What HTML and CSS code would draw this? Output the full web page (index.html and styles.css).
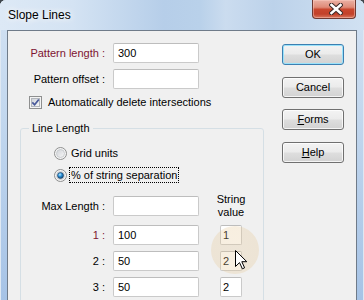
FILE: index.html
```html
<!DOCTYPE html>
<html>
<head>
<meta charset="utf-8">
<link rel="stylesheet" href="styles.css">
</head>
<body>
<div class="window">
  <div class="titlebar">
    <span class="title">Slope Lines</span>
    <div class="close">
      <svg width="14" height="12" viewBox="0 0 14 12">
        <path d="M2.5 2 L11.5 10 M11.5 2 L2.5 10" stroke="#3d2a28" stroke-width="4.6" stroke-linecap="square" fill="none"/>
        <path d="M2.5 2 L11.5 10 M11.5 2 L2.5 10" stroke="#ffffff" stroke-width="2.6" stroke-linecap="square" fill="none"/>
      </svg>
    </div>
  </div>
  <div class="client">
    <div class="main">
      <div class="form-grid">
        <span class="lbl red">Pattern length :</span>
        <div class="field">300</div>
        <span class="lbl">Pattern offset :</span>
        <div class="field"></div>
      </div>
      <div class="check-row">
        <svg width="13" height="13" viewBox="0 0 13 13">
          <defs>
            <linearGradient id="cbg" x1="0" y1="0" x2="1" y2="1">
              <stop offset="0" stop-color="#cdd1d8"/>
              <stop offset="1" stop-color="#f7f7f7"/>
            </linearGradient>
          </defs>
          <rect x="0.5" y="0.5" width="12" height="12" fill="#f4f4f4" stroke="#8e8f8f"/>
          <rect x="2.5" y="2.5" width="8" height="8" fill="url(#cbg)" stroke="#b2b6bc"/>
          <path d="M3.3 6.3 L5.6 8.8 L9.8 3.4" fill="none" stroke="#48599a" stroke-width="1.7"/>
        </svg>
        <span>Automatically delete intersections</span>
      </div>
      <fieldset class="group">
        <legend>Line Length</legend>
        <div class="radios">
          <div class="radio-row">
            <svg class="radio" width="13" height="13" viewBox="0 0 13 13">
              <defs>
                <linearGradient id="rbg" x1="0" y1="0" x2="1" y2="1">
                  <stop offset="0" stop-color="#cfd2d7"/>
                  <stop offset="1" stop-color="#f8f8f8"/>
                </linearGradient>
              </defs>
              <circle cx="6.5" cy="6.5" r="6" fill="#f4f4f4" stroke="#8e8f8f"/>
              <circle cx="6.5" cy="6.5" r="4" fill="url(#rbg)" stroke="#c3c6ca" stroke-width="0.8"/>
            </svg>
            <span class="rlabel">Grid units</span>
          </div>
          <div class="radio-row">
            <svg class="radio" width="13" height="13" viewBox="0 0 13 13">
              <defs>
                <radialGradient id="rdot" cx="0.4" cy="0.35" r="0.7">
                  <stop offset="0" stop-color="#b8edff"/>
                  <stop offset="0.45" stop-color="#2b8ed6"/>
                  <stop offset="1" stop-color="#0c426f"/>
                </radialGradient>
              </defs>
              <circle cx="6.5" cy="6.5" r="6" fill="#f4f4f4" stroke="#8e8f8f"/>
              <circle cx="6.5" cy="6.5" r="4" fill="#e4e6e9" stroke="#c3c6ca" stroke-width="0.8"/>
              <circle cx="6.5" cy="6.5" r="3" fill="url(#rdot)" stroke="#1d3f63" stroke-width="0.6"/>
            </svg>
            <span class="rlabel focus">% of string separation</span>
          </div>
        </div>
        <div class="len-grid">
          <span class="lbl">Max Length :</span>
          <div class="field"></div>
          <div class="sv-head">String<br>value</div>

          <span class="lbl red">1 :</span>
          <div class="field">100</div>
          <div class="field small">1</div>

          <span class="lbl">2 :</span>
          <div class="field">50</div>
          <div class="field small">2</div>

          <span class="lbl">3 :</span>
          <div class="field">50</div>
          <div class="field small">2</div>
        </div>
      </fieldset>
    </div>
    <div class="buttons">
      <button class="btn default">OK</button>
      <button class="btn">Cancel</button>
      <button class="btn"><u>F</u>orms</button>
      <button class="btn"><u>H</u>elp</button>
    </div>
  </div>
  <div class="halo"></div>
  <svg class="cursor" width="13" height="20" viewBox="0 0 13 20">
    <path d="M0.5 0.5 V16.5 L4.5 12.6 L7.4 18.8 L9.6 17.8 L6.8 11.7 H11.8 Z" fill="#ffffff" stroke="#000000" stroke-linejoin="miter"/>
  </svg>
</div>
</body>
</html>
```
FILE: styles.css
```css
html, body {
  margin: 0;
  padding: 0;
}
body {
  width: 364px;
  height: 300px;
  overflow: hidden;
  font-family: "Liberation Sans", Arial, sans-serif;
  font-size: 11px;
  color: #000;
  background: #40464d;
}
.window {
  position: relative;
  width: 364px;
  height: 300px;
  overflow: hidden;
  border-radius: 6px 6px 0 0;
  background: linear-gradient(to bottom, #d3e2f3 0%, #c2d7ee 40%, #a6c3e6 100%);
  box-shadow: inset 1px 0 0 #dfe8f2, inset -1px 0 0 #dfe8f2;
  display: flex;
  flex-direction: column;
}
.titlebar {
  height: 30px;
  flex: none;
  display: flex;
  justify-content: space-between;
  align-items: flex-start;
  padding-left: 8px;
  background: linear-gradient(to right, #dde9f6 0%, #d4e3f3 20%, #b6cee9 45%, #b9d1ea 55%, #cbdcef 62%, #bcd2ea 75%, #d1e1f2 100%);
}
.title {
  margin-top: 8px;
  font-size: 12px;
  line-height: 15px;
  color: #000;
  text-shadow: 0 0 6px #ffffff, 0 0 10px #ffffff;
}
.close {
  width: 44px;
  height: 19px;
  margin-right: 8px;
  box-sizing: border-box;
  border: 1px solid #6e3a33;
  border-top: none;
  border-radius: 0 0 4px 4px;
  background: linear-gradient(to bottom, #eab1a4 0%, #df8b78 40%, #c9472e 52%, #c2412a 78%, #d9775e 100%);
  box-shadow: inset 0 0 0 1px rgba(255, 210, 200, 0.45);
  display: flex;
  align-items: center;
  justify-content: center;
  padding-left: 4px;
}
.close svg {
  display: block;
}
.client {
  flex: 1;
  margin: 0 7px;
  border: 1px solid #6f7b89;
  border-bottom: none;
  background: #f0f0f0;
  display: flex;
  padding: 12px 12px 0 12px;
  min-height: 0;
}
.main {
  flex: 1;
  display: flex;
  flex-direction: column;
  align-items: flex-start;
}
.form-grid {
  display: grid;
  grid-template-columns: 85px 86px;
  grid-auto-rows: 20px;
  column-gap: 8px;
  row-gap: 6px;
  align-items: center;
}
.lbl {
  text-align: right;
  line-height: 13px;
  white-space: nowrap;
}
.red {
  color: #7e1330;
}
.field {
  box-sizing: border-box;
  height: 20px;
  border: 1px solid #cacaca;
  border-top-color: #bdbdbd;
  border-radius: 2px;
  background: #fff;
  padding: 0 4px;
  line-height: 18px;
  white-space: nowrap;
}
.field.small {
  width: 22px;
  padding: 0 2px;
  justify-self: center;
}
.check-row {
  margin-top: 7px;
  margin-left: 9px;
  display: flex;
  align-items: center;
  gap: 6px;
  height: 13px;
  line-height: 13px;
  white-space: nowrap;
}
.check-row svg {
  display: block;
  flex: none;
}
.group {
  margin: 13px 0 0 0;
  padding: 10px 0 10px 0;
  width: 244px;
  box-sizing: border-box;
  border: 1px solid #d5dfe5;
  border-radius: 3px;
  min-width: 0;
}
.group legend {
  margin-left: 8px;
  padding: 0 3px;
  line-height: 13px;
}
.radios {
  padding-left: 33px;
  display: flex;
  flex-direction: column;
  gap: 6px;
}
.radio-row {
  display: flex;
  align-items: flex-start;
  gap: 2px;
}
.radio {
  display: block;
  flex: none;
  margin-top: 2px;
}
.rlabel {
  border: 1px dotted transparent;
  padding: 0 1px;
  line-height: 14px;
  white-space: nowrap;
}
.rlabel.focus {
  border-color: #000;
}
.len-grid {
  margin-top: 10px;
  display: grid;
  grid-template-columns: 84px 86px 48px;
  grid-template-rows: 26px;
  grid-auto-rows: 20px;
  column-gap: 8px;
  row-gap: 6px;
  align-items: center;
}
.sv-head {
  text-align: center;
  line-height: 13px;
}
.buttons {
  margin-left: auto;
  padding-top: 1px;
  display: flex;
  flex-direction: column;
  gap: 11.67px;
}
.btn {
  box-sizing: border-box;
  width: 62px;
  height: 21px;
  margin: 0;
  padding: 0;
  border: 1px solid #707070;
  border-radius: 3px;
  background: linear-gradient(to bottom, #f3f3f3 0%, #ebebeb 48%, #dedede 52%, #d2d2d2 100%);
  box-shadow: inset 0 0 0 1px rgba(255, 255, 255, 0.75);
  font-family: "Liberation Sans", Arial, sans-serif;
  font-size: 11px;
  line-height: 19px;
  color: #000;
  text-align: center;
}
.btn.default {
  border-color: #3c7fb1;
  box-shadow: inset 0 0 0 1px #9ae2fa;
}
.halo {
  position: absolute;
  left: 211px;
  top: 226px;
  width: 48px;
  height: 48px;
  border-radius: 50%;
  background: radial-gradient(circle, rgba(230, 200, 150, 0.28) 0%, rgba(230, 200, 150, 0.3) 82%, rgba(220, 190, 140, 0.38) 94%, rgba(220, 190, 140, 0) 100%);
  pointer-events: none;
}
.cursor {
  position: absolute;
  left: 235px;
  top: 250px;
  display: block;
}
```
